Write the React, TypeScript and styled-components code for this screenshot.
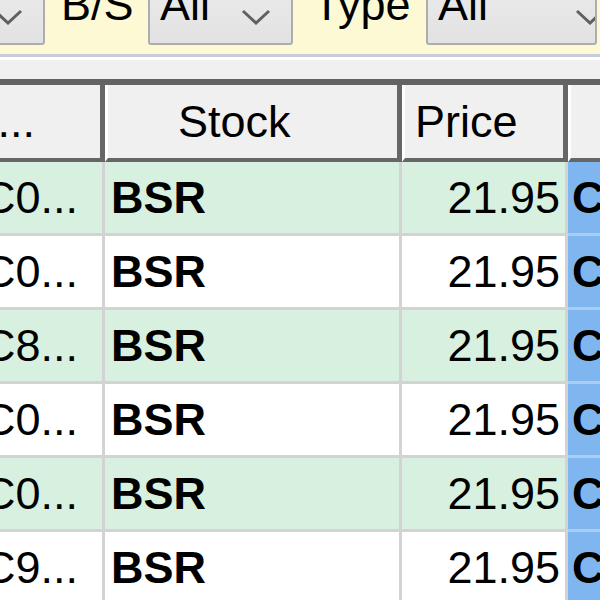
import styled, { createGlobalStyle } from "styled-components";

const GlobalStyle = createGlobalStyle`
  html, body {
    margin: 0;
    padding: 0;
    overflow: hidden;
    background: #ffffff;
  }
  body {
    font-family: "Liberation Sans", Arial, sans-serif;
    font-size: 45px;
    color: #000;
  }
`;

const rows = [
  { id: "C0...", green: true },
  { id: "C0...", green: false },
  { id: "C8...", green: true },
  { id: "C0...", green: false },
  { id: "C0...", green: true },
  { id: "C9...", green: false },
];

const COLUMNS = "165px 297px 166px 200px";

function Chevron() {
  return (
    <Arrow viewBox="0 0 30 16" width={30} height={16}>
      <polyline points="2,2 15,14 28,2" fill="none" stroke="#606060" strokeWidth={3} />
    </Arrow>
  );
}

export default function App() {
  return (
    <>
      <GlobalStyle />
      <Page>
        <Toolbar>
          <Combo $width={105}>
            <ComboText />
            <Chevron />
          </Combo>
          <Label $width={103} $indent={16}>
            B/S
          </Label>
          <Combo $width={145}>
            <ComboText>All</ComboText>
            <Chevron />
          </Combo>
          <Label $width={133} $indent={20}>
            Type
          </Label>
          <Combo $width={171} $arrowGap={-10}>
            <ComboText>All</ComboText>
            <Chevron />
          </Combo>
        </Toolbar>
        <Divider />
        <Strip />
        <Grid>
          <HeaderRow>
            <HeaderCell $align="end" $pad={65}>
              ...
            </HeaderCell>
            <HeaderCell $pad={70}>Stock</HeaderCell>
            <HeaderCell $pad={10}>Price</HeaderCell>
            <HeaderCell />
          </HeaderRow>
          {rows.map((r, i) => (
            <Row key={i} $green={r.green}>
              <Cell $align="end" $pad={24}>
                {r.id}
              </Cell>
              <Cell $pad={6}>
                <b>BSR</b>
              </Cell>
              <Cell $align="end" $pad={5}>
                21.95
              </Cell>
              <SideCell>
                <b>C</b>
              </SideCell>
            </Row>
          ))}
        </Grid>
      </Page>
    </>
  );
}

const Page = styled.div`
  margin: -30px 0 0 -60px;
  width: 900px;
`;

const Toolbar = styled.div`
  display: flex;
  align-items: flex-start;
  height: 84px;
  padding-top: 9px;
  box-sizing: border-box;
  background: #fdf9d4;
`;

const Combo = styled.div<{ $width: number; $arrowGap?: number }>`
  display: flex;
  align-items: flex-start;
  box-sizing: border-box;
  width: ${(p) => p.$width}px;
  height: 66px;
  border: 2px solid #adadad;
  border-radius: 3px;
  background: linear-gradient(#ebebeb, #e2e2e2);
  overflow: hidden;
  padding-left: 10px;

  svg {
    margin-right: ${(p) => p.$arrowGap ?? 20}px;
  }
`;

const ComboText = styled.span`
  flex: 1;
  line-height: 52px;
  margin-top: -2px;
  white-space: nowrap;
`;

const Arrow = styled.svg`
  flex-shrink: 0;
  margin-top: 28px;
`;

const Label = styled.div<{ $width: number; $indent: number }>`
  box-sizing: border-box;
  width: ${(p) => p.$width}px;
  padding-left: ${(p) => p.$indent}px;
  line-height: 52px;
  white-space: nowrap;
`;

const Divider = styled.div`
  height: 0;
  border-top: 3px solid #c8cbd8;
  border-bottom: 3px solid #ffffff;
`;

const Strip = styled.div`
  height: 19px;
  background: #f0f0f0;
  border-bottom: 6px solid #636363;
`;

const Grid = styled.div`
  display: flex;
  flex-direction: column;
`;

const HeaderRow = styled.div`
  display: grid;
  grid-template-columns: ${COLUMNS};
  height: 77px;
`;

const HeaderCell = styled.div<{ $align?: "start" | "end"; $pad?: number }>`
  display: flex;
  align-items: center;
  justify-content: ${(p) => (p.$align === "end" ? "flex-end" : "flex-start")};
  box-sizing: border-box;
  background: #f0f0f0;
  border-left: 3px solid #ffffff;
  border-right: 5px solid #666666;
  border-bottom: 4px solid #666666;
  padding: 0 ${(p) => (p.$align === "end" ? p.$pad ?? 0 : 0)}px 0
    ${(p) => (p.$align === "end" ? 0 : p.$pad ?? 0)}px;
  white-space: nowrap;
  overflow: hidden;
`;

const Row = styled.div<{ $green: boolean }>`
  display: grid;
  grid-template-columns: ${COLUMNS};
  height: 74px;
  background: ${(p) => (p.$green ? "#d7f0df" : "#ffffff")};
`;

const Cell = styled.div<{ $align?: "start" | "end"; $pad?: number }>`
  display: flex;
  align-items: center;
  justify-content: ${(p) => (p.$align === "end" ? "flex-end" : "flex-start")};
  box-sizing: border-box;
  border-right: 3px solid #d3d3d3;
  border-bottom: 3px solid #d3d3d3;
  padding: 0 ${(p) => (p.$align === "end" ? p.$pad ?? 0 : 0)}px 0
    ${(p) => (p.$align === "end" ? 0 : p.$pad ?? 0)}px;
  white-space: nowrap;
  overflow: hidden;

  b {
    font-weight: bold;
  }
`;

const SideCell = styled(Cell)`
  background: #7fb6ef;
  border-bottom-color: #a9cdf3;
  padding-left: 4px;
`;
